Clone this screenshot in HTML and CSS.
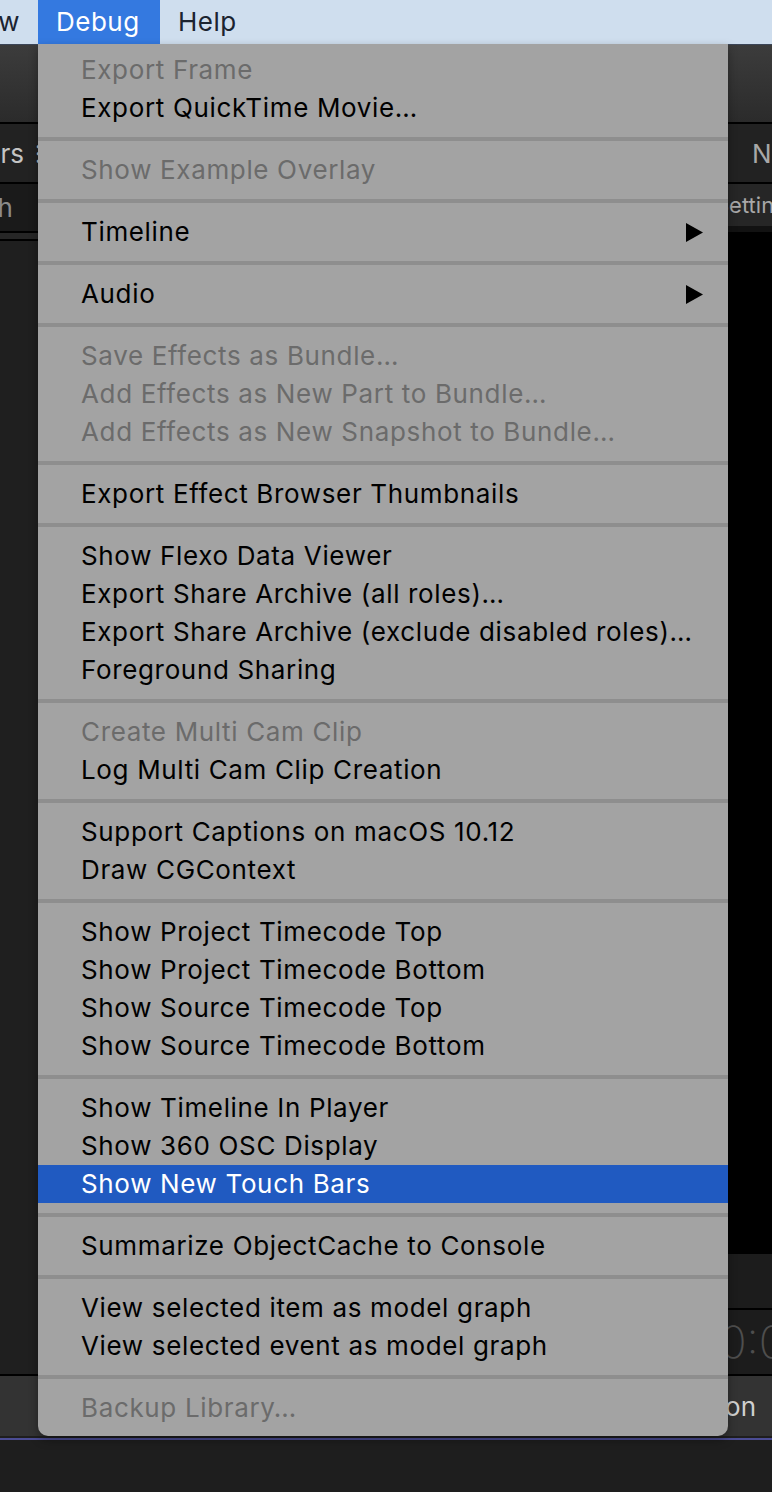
FILE: index.html
```html
<!DOCTYPE html>
<html>
<head>
<meta charset="utf-8">
<title>Debug menu</title>
<link rel="stylesheet" href="styles.css">
</head>
<body>
<div class="screen">
  <div class="menubar">
    <span class="mb-item mb-view">View</span>
    <span class="mb-item mb-active">Debug</span>
    <span class="mb-item">Help</span>
  </div>
  <div class="toolbar"></div>
  <div class="workspace">
    <div class="side side-left">
      <div class="hdr hdr-left"><span>Generators</span><span class="dots">⁝</span></div>
      <div class="search-left"><span>Search</span></div>
      <div class="gap-left"></div>
      <div class="fill-left"></div>
    </div>
    <div class="center"></div>
    <div class="side side-right">
      <div class="hdr hdr-right"><span>Name</span></div>
      <div class="settings-right"><span>Settings</span></div>
      <div class="viewer"></div>
      <div class="tc-top"></div>
      <div class="tc"><span>00:00:00</span></div>
    </div>
  </div>
  <div class="footer">
    <span class="footer-text">Position</span>
  </div>
  <div class="timeline"></div>

  <div class="menu">
    <div class="group">
      <div class="item disabled">Export Frame</div>
      <div class="item">Export QuickTime Movie…</div>
    </div>
    <div class="sep"></div>
    <div class="group">
      <div class="item disabled">Show Example Overlay</div>
    </div>
    <div class="sep"></div>
    <div class="group">
      <div class="item">Timeline<svg class="arrow" viewBox="0 0 17 19" width="17" height="19"><polygon points="0,0 17,9.5 0,19" fill="#000"/></svg></div>
    </div>
    <div class="sep"></div>
    <div class="group">
      <div class="item">Audio<svg class="arrow" viewBox="0 0 17 19" width="17" height="19"><polygon points="0,0 17,9.5 0,19" fill="#000"/></svg></div>
    </div>
    <div class="sep"></div>
    <div class="group">
      <div class="item disabled">Save Effects as Bundle…</div>
      <div class="item disabled">Add Effects as New Part to Bundle…</div>
      <div class="item disabled">Add Effects as New Snapshot to Bundle…</div>
    </div>
    <div class="sep"></div>
    <div class="group">
      <div class="item">Export Effect Browser Thumbnails</div>
    </div>
    <div class="sep"></div>
    <div class="group">
      <div class="item">Show Flexo Data Viewer</div>
      <div class="item">Export Share Archive (all roles)…</div>
      <div class="item">Export Share Archive (exclude disabled roles)…</div>
      <div class="item">Foreground Sharing</div>
    </div>
    <div class="sep"></div>
    <div class="group">
      <div class="item disabled">Create Multi Cam Clip</div>
      <div class="item">Log Multi Cam Clip Creation</div>
    </div>
    <div class="sep"></div>
    <div class="group">
      <div class="item">Support Captions on macOS 10.12</div>
      <div class="item">Draw CGContext</div>
    </div>
    <div class="sep"></div>
    <div class="group">
      <div class="item">Show Project Timecode Top</div>
      <div class="item">Show Project Timecode Bottom</div>
      <div class="item">Show Source Timecode Top</div>
      <div class="item">Show Source Timecode Bottom</div>
    </div>
    <div class="sep"></div>
    <div class="group">
      <div class="item">Show Timeline In Player</div>
      <div class="item">Show 360 OSC Display</div>
      <div class="item selected">Show New Touch Bars</div>
    </div>
    <div class="sep"></div>
    <div class="group">
      <div class="item">Summarize ObjectCache to Console</div>
    </div>
    <div class="sep"></div>
    <div class="group">
      <div class="item">View selected item as model graph</div>
      <div class="item">View selected event as model graph</div>
    </div>
    <div class="sep"></div>
    <div class="group">
      <div class="item disabled">Backup Library…</div>
    </div>
  </div>
</div>
</body>
</html>
```
FILE: styles.css
```css
* { box-sizing: border-box; }
html, body {
  margin: 0;
  padding: 0;
  background: #1e1e1e;
  overflow: hidden;
}
body {
  font-family: "Inter", "Noto Sans", sans-serif;
  font-size: 26px;
}
.screen {
  position: relative;
  width: 772px;
  height: 1492px;
  overflow: hidden;
  display: flex;
  flex-direction: column;
}

/* menu bar */
.menubar {
  height: 44px;
  background: #cfdeee;
  display: flex;
  align-items: stretch;
  color: #1b2330;
  flex: none;
  letter-spacing: 0.5px;
}
.mb-item {
  display: flex;
  align-items: center;
  padding: 0 18px;
  line-height: 44px;
}
.mb-view {
  width: 38px;
  padding: 0;
  justify-content: flex-end;
  overflow: hidden;
  padding-right: 18px;
}
.mb-active {
  background: #3479e0;
  color: #fff;
  width: 122px;
}

/* app backdrop */
.toolbar {
  height: 80px;
  flex: none;
  background: linear-gradient(#3c3c3c, #2b2b2b);
  border-top: 1px solid #3c4658;
  border-bottom: 2px solid #000;
}
.workspace {
  height: 1250px;
  flex: none;
  display: flex;
}
.side {
  display: flex;
  flex-direction: column;
}
.side-left { width: 38px; }
.side-right { width: 44px; }
.center { flex: 1; background: #1f1f1f; }

.hdr {
  height: 60px;
  flex: none;
  background: #222;
  border-bottom: 2px solid #000;
  display: flex;
  align-items: center;
  white-space: nowrap;
  color: #c4c4c4;
}
.hdr-left {
  justify-content: flex-end;
  margin-right: -4px;
}
.dots { margin-left: 11px; }
.hdr-right {
  padding-left: 24px;
  overflow: hidden;
  color: #a8a8a8;
}
.search-left {
  height: 49px;
  flex: none;
  background: #1a1a1a;
  border-bottom: 2px solid #000;
  display: flex;
  align-items: center;
  justify-content: flex-end;
  padding-right: 25px;
  color: #8a8a8a;
  white-space: nowrap;
}
.gap-left {
  height: 8px;
  flex: none;
  background: #262626;
  border-bottom: 2px solid #000;
}
.fill-left { flex: 1; background: #1f1f1f; }

.settings-right {
  height: 48px;
  flex: none;
  background: #262626;
  border-bottom: 6px solid #121212;
  display: flex;
  align-items: center;
  overflow: hidden;
  white-space: nowrap;
  color: #a8a8a8;
  font-size: 22px;
}
.settings-right span { margin-left: -13px; }
.viewer {
  height: 1022px;
  flex: none;
  background: #000;
}
.tc-top {
  height: 56px;
  flex: none;
  background: #1c1c1c;
  border-bottom: 2px solid #000;
}
.tc {
  flex: 1;
  background: #1c1c1c;
  display: flex;
  align-items: center;
  overflow: hidden;
  white-space: nowrap;
  font-size: 44px;
  font-weight: 200;
  color: #4e4e4e;
}
.tc span { margin-left: -100px; }

.footer {
  height: 62px;
  flex: none;
  background: #333;
  border-top: 2px solid #000;
  display: flex;
  align-items: center;
  justify-content: flex-end;
  padding-right: 16px;
  color: #cfcfcf;
  white-space: nowrap;
}
.timeline {
  flex: 1;
  background: #1e1e1e;
  border-top: 2px solid #1e1e1e;
}
.timeline::before {
  content: "";
  display: block;
  height: 2px;
  background: #4b4c94;
}

/* dropdown menu (overlay) */
.menu {
  position: absolute;
  top: 44px;
  left: 38px;
  width: 690px;
  background: #a3a3a3;
  border-radius: 0 0 10px 10px;
  padding: 7px 0 9px;
  box-shadow: 0 4px 10px rgba(0,0,0,0.35);
}
.item {
  height: 38px;
  line-height: 38px;
  padding-left: 43px;
  padding-right: 25px;
  color: #000;
  display: flex;
  align-items: center;
  white-space: nowrap;
  letter-spacing: 0.65px;
}
.item.disabled { color: #6b6b6b; }
.item.selected { background: #205ac1; color: #fff; }
.arrow { margin-left: auto; }
.sep {
  height: 4px;
  margin: 10px 0;
  background: #8e8e8e;
}
```
